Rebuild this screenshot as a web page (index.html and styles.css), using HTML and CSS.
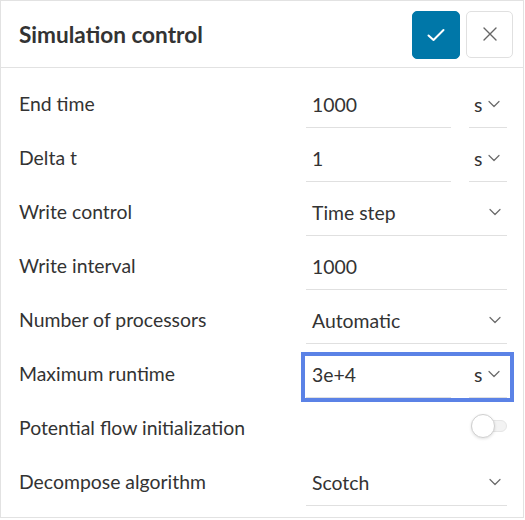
FILE: index.html
```html
<!DOCTYPE html>
<html lang="en">
<head>
<meta charset="utf-8">
<title>Simulation control</title>
<link rel="stylesheet" href="styles.css">
</head>
<body>
<div class="panel">
  <header class="head">
    <h1 class="title">Simulation control</h1>
    <div class="actions">
      <button class="btn btn-ok" aria-label="Confirm">
        <svg width="20" height="20" viewBox="0 0 20 20"><path d="M2.5 10.5 L7.5 15 L17.5 5" fill="none" stroke="#fff" stroke-width="2" stroke-linecap="round" stroke-linejoin="round"/></svg>
      </button>
      <button class="btn btn-close" aria-label="Close">
        <svg width="16" height="16" viewBox="0 0 16 16"><path d="M2 2 L14 14 M14 2 L2 14" fill="none" stroke="#666" stroke-width="1.4" stroke-linecap="round"/></svg>
      </button>
    </div>
  </header>
  <div class="form">
    <div class="row">
      <span class="label">End time</span>
      <div class="field split">
        <div class="input">1000</div>
        <div class="unit">s<svg class="chev" viewBox="0 0 12 8"><path d="M1 1.5 L6 6.5 L11 1.5" /></svg></div>
      </div>
    </div>
    <div class="row">
      <span class="label">Delta t</span>
      <div class="field split">
        <div class="input">1</div>
        <div class="unit">s<svg class="chev" viewBox="0 0 12 8"><path d="M1 1.5 L6 6.5 L11 1.5" /></svg></div>
      </div>
    </div>
    <div class="row">
      <span class="label">Write control</span>
      <div class="field">
        <div class="select">Time step<svg class="chev" viewBox="0 0 12 8"><path d="M1 1.5 L6 6.5 L11 1.5" /></svg></div>
      </div>
    </div>
    <div class="row">
      <span class="label">Write interval</span>
      <div class="field">
        <div class="select">1000</div>
      </div>
    </div>
    <div class="row">
      <span class="label">Number of processors</span>
      <div class="field">
        <div class="select">Automatic<svg class="chev" viewBox="0 0 12 8"><path d="M1 1.5 L6 6.5 L11 1.5" /></svg></div>
      </div>
    </div>
    <div class="row">
      <span class="label">Maximum runtime</span>
      <div class="field split focused">
        <div class="input">3e+4</div>
        <div class="unit">s<svg class="chev" viewBox="0 0 12 8"><path d="M1 1.5 L6 6.5 L11 1.5" /></svg></div>
      </div>
    </div>
    <div class="row">
      <span class="label">Potential flow initialization</span>
      <div class="field plain">
        <span class="toggle"><span class="knob"></span></span>
      </div>
    </div>
    <div class="row">
      <span class="label">Decompose algorithm</span>
      <div class="field">
        <div class="select">Scotch<svg class="chev" viewBox="0 0 12 8"><path d="M1 1.5 L6 6.5 L11 1.5" /></svg></div>
      </div>
    </div>
  </div>
</div>
</body>
</html>
```
FILE: styles.css
```css
* { box-sizing: border-box; }
html, body { margin: 0; padding: 0; background: #fff; }
body { font-family: Lato, "Open Sans", sans-serif; color: #333; }

.panel {
  width: 524px;
  height: 518px;
  border: 1px solid #e2e2e2;
  background: #fff;
}

.head {
  height: 67px;
  border-bottom: 1px solid #e2e2e2;
  display: flex;
  align-items: center;
  justify-content: space-between;
  padding: 0 10px 0 18px;
}
.title {
  margin: 0;
  font-size: 22.6px;
  font-weight: 700;
  color: #333;
  letter-spacing: 0;
}
.actions { display: flex; gap: 6px; margin-top: 1px; }
.btn {
  width: 48px;
  height: 48px;
  border-radius: 5px;
  padding: 0;
  display: flex;
  align-items: center;
  justify-content: center;
  cursor: pointer;
}
.btn-ok { background: #0077a8; border: 1px solid #0077a8; }
.btn-close { width: 47px; height: 47px; background: #fff; border: 1px solid #e0e0e0; }

.form { padding: 9px 16px 0 18px; }
.row {
  height: 54px;
  display: grid;
  grid-template-columns: 1fr 201px;
  padding-top: 4px;
}
.label {
  align-self: start;
  height: 46px;
  line-height: 46px;
  font-size: 19.4px;
  color: #333;
}
.field {
  height: 47px;
  display: flex;
  font-size: 19.4px;
  color: #333;
  position: relative;
}
.split { gap: 18px; }
.input, .select, .unit {
  height: 47px;
  border-bottom: 1px solid #e0e0e0;
  display: flex;
  align-items: center;
}
.input { flex: 1; padding-left: 6px; }
.unit { width: 38px; padding-left: 5px; gap: 6px; }
.select { flex: 1; padding: 0 6px 0 6px; justify-content: space-between; }
.plain { justify-content: flex-end; align-items: center; padding-right: 0; }

.chev {
  width: 12px;
  height: 8px;
  fill: none;
  stroke: #6a6a6a;
  stroke-width: 1.2;
  stroke-linecap: round;
  stroke-linejoin: round;
}

.focused::after {
  content: "";
  position: absolute;
  left: -5px;
  right: -7px;
  top: 1px;
  height: 42px;
  border: 4px solid #5b82e6;
  pointer-events: none;
}

.toggle {
  position: relative;
  width: 36px;
  height: 12px;
  border-radius: 6px;
  background: #f3f3f3;
  border: 1px solid #e6e6e6;
  margin-top: -6px;
}
.knob {
  position: absolute;
  left: -1px;
  top: -7px;
  width: 24px;
  height: 24px;
  border-radius: 50%;
  background: #fff;
  border: 1px solid #d0d0d0;
  box-shadow: 0 1px 3px rgba(0,0,0,0.12);
}
```
